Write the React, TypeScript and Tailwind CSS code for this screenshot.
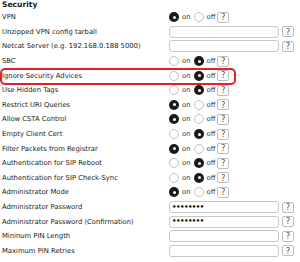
import { FC } from 'react'

type Row =
  | { label: string; kind: 'radio'; on: boolean }
  | { label: string; kind: 'text'; value?: string }

const rows: Row[] = [
  { label: 'VPN', kind: 'radio', on: true },
  { label: 'Unzipped VPN config tarball', kind: 'text' },
  { label: 'Netcat Server (e.g. 192.168.0.188 5000)', kind: 'text' },
  { label: 'SBC', kind: 'radio', on: false },
  { label: 'Ignore Security Advices', kind: 'radio', on: false },
  { label: 'Use Hidden Tags', kind: 'radio', on: false },
  { label: 'Restrict URI Queries', kind: 'radio', on: true },
  { label: 'Allow CSTA Control', kind: 'radio', on: true },
  { label: 'Empty Client Cert', kind: 'radio', on: false },
  { label: 'Filter Packets from Registrar', kind: 'radio', on: true },
  { label: 'Authentication for SIP Reboot', kind: 'radio', on: false },
  { label: 'Authentication for SIP Check-Sync', kind: 'radio', on: false },
  { label: 'Administrator Mode', kind: 'radio', on: true },
  { label: 'Administrator Password', kind: 'text', value: '••••••••' },
  { label: 'Administrator Password (Confirmation)', kind: 'text', value: '••••••••' },
  { label: 'Mininum PIN Length', kind: 'text' },
  { label: 'Maximum PIN Retries', kind: 'text' },
]

const Radio: FC<{ checked: boolean }> = ({ checked }) =>
  checked ? (
    <span className="flex h-[10px] w-[10px] items-center justify-center rounded-full bg-[#1a1a1a]">
      <span className="h-[3px] w-[3px] rounded-full bg-white" />
    </span>
  ) : (
    <span className="h-[10px] w-[10px] rounded-full border border-[#c4c4c4] bg-white" />
  )

const Help: FC = () => (
  <span className="flex h-[11px] w-[12px] items-center justify-center rounded-[2px] border border-[#bdbdbd] text-[8.5px] leading-none text-[#555]">
    ?
  </span>
)

export default function App() {
  return (
    <div
      className="relative h-[262px] w-[300px] overflow-hidden bg-white text-[6.8px] text-[#1a1a1a]"
      style={{ fontFamily: '"DejaVu Sans", Verdana, sans-serif' }}
    >
      <div className="flex h-[10px] items-center pl-[2px] text-[7.6px] font-bold">Security</div>
      {rows.map((row) => (
        <div key={row.label} className="flex h-[14.6px] items-center">
          <div className="w-[169px] shrink-0 pl-[2px] whitespace-nowrap">{row.label}</div>
          {row.kind === 'radio' ? (
            <div className="flex items-center">
              <Radio checked={row.on} />
              <span className="ml-[3px] mr-[4px] text-[#333]">on</span>
              <Radio checked={!row.on} />
              <span className="ml-[2px] mr-[2px] text-[#333]">off</span>
              <Help />
            </div>
          ) : (
            <div className="flex items-center gap-[3px]">
              <div className="flex h-[12px] w-[110px] items-center rounded-[3px] border border-[#c8c8c8] bg-white pl-[2px] text-[7px] font-bold tracking-[-0.5px] text-[#111]">
                {row.value}
              </div>
              <Help />
            </div>
          )}
        </div>
      ))}
      <div className="pointer-events-none absolute left-0 top-[68px] h-[17px] w-[236px] rounded-[5px] border-2 border-[#e0202a]" />
    </div>
  )
}
